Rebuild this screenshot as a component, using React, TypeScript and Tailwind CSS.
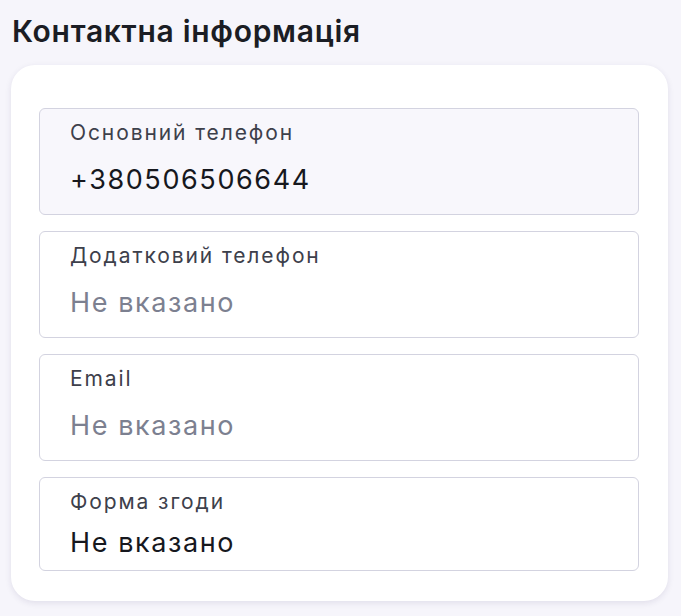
import React from "react";

type Field = { label: string; value: string; empty: boolean; tinted?: boolean; compact?: boolean };

const fields: Field[] = [
  { label: "Основний телефон", value: "+380506506644", empty: false, tinted: true },
  { label: "Додатковий телефон", value: "Не вказано", empty: true },
  { label: "Email", value: "Не вказано", empty: true },
  { label: "Форма згоди", value: "Не вказано", empty: false, compact: true },
];

export default function App() {
  return (
    <div className="min-h-[616px] w-[681px] bg-[#f6f5fb] pt-[13px] font-['Inter',sans-serif]">
      <h2 className="pl-[12px] text-[30px] leading-[36px] font-semibold text-[#1b1d24] tracking-[0.7px]">
        Контактна інформація
      </h2>
      <div className="ml-[11px] mt-[16px] w-[657px] rounded-[24px] bg-white pt-[43px] pb-[30px] pl-[28px] pr-[29px] shadow-[0_2px_6px_rgba(40,30,90,0.10)]">
        <div className="flex flex-col gap-[16px]">
          {fields.map((f) => (
            <div
              key={f.label}
              className={`rounded-[6px] border border-[#d3d3e0] pl-[30px] pt-[12px] ${
                f.tinted ? "bg-[#f8f7fc]" : "bg-white"
              } ${f.compact ? "h-[94px]" : "h-[107px]"}`}
            >
              <div className="text-[21px] leading-[24px] font-normal tracking-[1.9px] text-[#3d404b]">
                {f.label}
              </div>
              <div
                className={`${f.compact ? "mt-[13px]" : "mt-[19px]"} text-[27px] leading-[32px] tracking-[1.6px] ${
                  f.empty ? "text-[#7c8090]" : "text-[#16181e]"
                }`}
              >
                {f.value}
              </div>
            </div>
          ))}
        </div>
      </div>
    </div>
  );
}
